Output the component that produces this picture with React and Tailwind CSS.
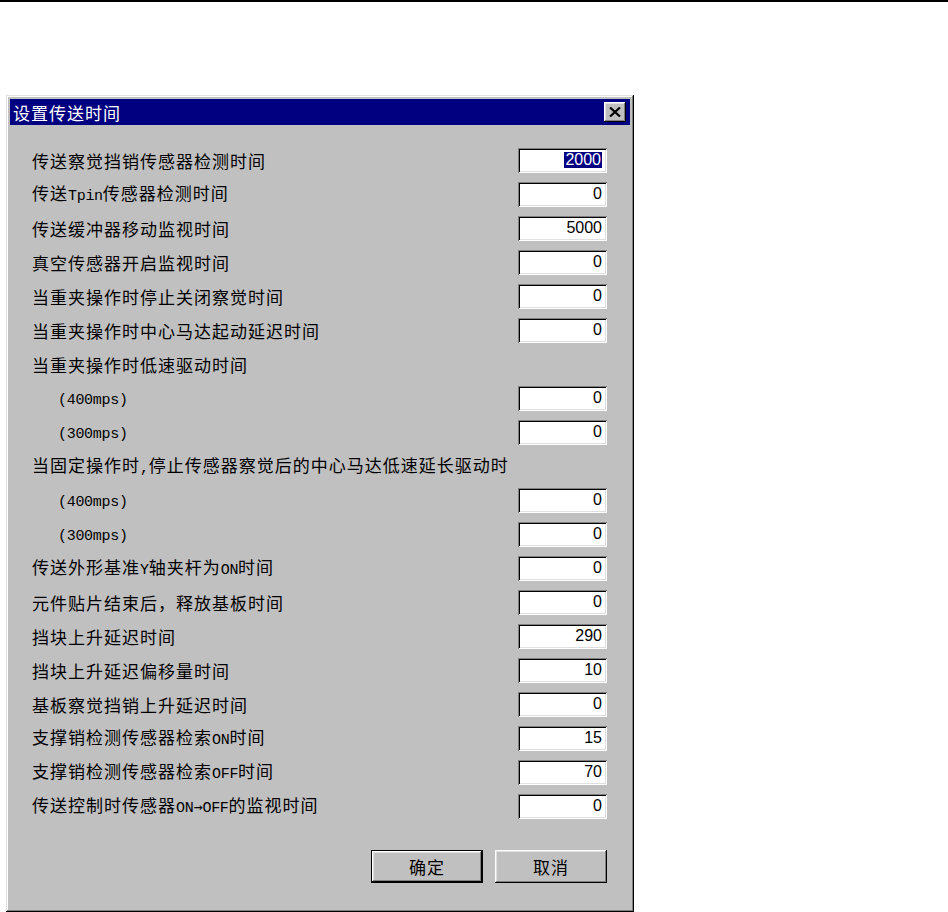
const rows = [
  { label: '传送察觉挡销传感器检测时间', value: '2000', selected: true },
  { label: '传送Tpin传感器检测时间', value: '0' },
  { label: '传送缓冲器移动监视时间', value: '5000' },
  { label: '真空传感器开启监视时间', value: '0' },
  { label: '当重夹操作时停止关闭察觉时间', value: '0' },
  { label: '当重夹操作时中心马达起动延迟时间', value: '0' },
  { label: '当重夹操作时低速驱动时间' },
  { label: '(400mps)', value: '0', indent: true },
  { label: '(300mps)', value: '0', indent: true },
  { label: '当固定操作时,停止传感器察觉后的中心马达低速延长驱动时' },
  { label: '(400mps)', value: '0', indent: true },
  { label: '(300mps)', value: '0', indent: true },
  { label: '传送外形基准Y轴夹杆为ON时间', value: '0' },
  { label: '元件贴片结束后，释放基板时间', value: '0' },
  { label: '挡块上升延迟时间', value: '290' },
  { label: '挡块上升延迟偏移量时间', value: '10' },
  { label: '基板察觉挡销上升延迟时间', value: '0' },
  { label: '支撑销检测传感器检索ON时间', value: '15' },
  { label: '支撑销检测传感器检索OFF时间', value: '70' },
  { label: '传送控制时传感器ON→OFF的监视时间', value: '0' },
];

// half-width runs are set in a mono face, CJK runs get a bit of tracking
function MixedText({ text }) {
  const parts = text.split(/([\x20-\x7e]+|→)/).filter(Boolean);
  return (
    <span className="whitespace-pre">
      {parts.map((p, i) => {
        if (p === '→') {
          return (
            <span key={i} className="[font-family:'DejaVu_Sans_Mono',monospace] text-[15px] tracking-normal">
              {p}
            </span>
          );
        }
        if (/^[\x20-\x7e]+$/.test(p)) {
          return (
            <span key={i} className="[font-family:'Liberation_Mono',monospace] text-[15px] tracking-[-0.3px]">
              {p}
            </span>
          );
        }
        return (
          <span key={i} className="tracking-[1px]">
            {p}
          </span>
        );
      })}
    </span>
  );
}

function Field({ value, selected }) {
  return (
    <div className="flex h-[25px] w-[89px] items-center justify-end bg-white pr-[5px] shadow-[inset_1px_1px_#808080,inset_-1px_-1px_#ffffff,inset_2px_2px_#000000,inset_-2px_-2px_#dfdfdf]">
      <span
        className={
          selected
            ? "bg-[#000080] px-[1px] [font-family:'Liberation_Sans',Arial,sans-serif] text-[16px] leading-[16px] text-white"
            : "[font-family:'Liberation_Sans',Arial,sans-serif] text-[16px] leading-[16px] text-black"
        }
      >
        {value}
      </span>
    </div>
  );
}

function Button({ children, isDefault }) {
  return (
    <button
      type="button"
      className={
        isDefault
          ? 'flex h-[33px] w-[112px] items-center justify-center border border-black bg-[#c0c0c0] text-[17px] tracking-[1px] text-black shadow-[inset_-1px_-1px_#000000,inset_1px_1px_#ffffff,inset_-2px_-2px_#808080,inset_2px_2px_#dfdfdf]'
          : 'flex h-[33px] w-[112px] items-center justify-center bg-[#c0c0c0] text-[17px] tracking-[1px] text-black shadow-[inset_-1px_-1px_#000000,inset_1px_1px_#ffffff,inset_-2px_-2px_#808080,inset_2px_2px_#dfdfdf]'
      }
    >
      {children}
    </button>
  );
}

export default function App() {
  return (
    <div className="min-h-[912px] bg-white [font-family:'Noto_Sans_CJK_SC',sans-serif]">
      <div className="h-[2px] bg-black" />
      <div className="pl-[6px] pt-[93px]">
        <div className="flex h-[817px] w-[628px] flex-col bg-[#c0c0c0] p-[4px] shadow-[inset_-1px_-1px_#000000,inset_1px_1px_#dfdfdf,inset_-2px_-2px_#808080,inset_2px_2px_#ffffff]">
          <div className="flex h-[26px] items-center justify-between bg-[#000080] pl-[3px] pr-[4px]">
            <span className="text-[17px] leading-none tracking-[1px] text-white">设置传送时间</span>
            <div className="flex h-[20px] w-[22px] items-center justify-center bg-[#c0c0c0] shadow-[inset_-1px_-1px_#000000,inset_1px_1px_#ffffff,inset_-2px_-2px_#808080,inset_2px_2px_#dfdfdf]">
              <svg width="12" height="10" viewBox="0 0 12 10">
                <path d="M1 0.5 L11 9.5 M11 0.5 L1 9.5" stroke="#000" strokeWidth="2.2" />
              </svg>
            </div>
          </div>

          <div className="flex flex-col pl-[22px] pr-[23px] pt-[18px]">
            {rows.map((r, i) => (
              <div key={i} className="flex h-[34px] items-center justify-between">
                <div className={r.indent ? 'pl-[26px] text-[17px] leading-none text-black' : 'text-[17px] leading-none text-black'}>
                  <MixedText text={r.label} />
                </div>
                {r.value !== undefined ? <Field value={r.value} selected={r.selected} /> : null}
              </div>
            ))}
          </div>

          <div className="mt-[27px] flex justify-end gap-[12px] pr-[23px]">
            <Button isDefault>确定</Button>
            <Button>取消</Button>
          </div>
        </div>
      </div>
    </div>
  );
}
